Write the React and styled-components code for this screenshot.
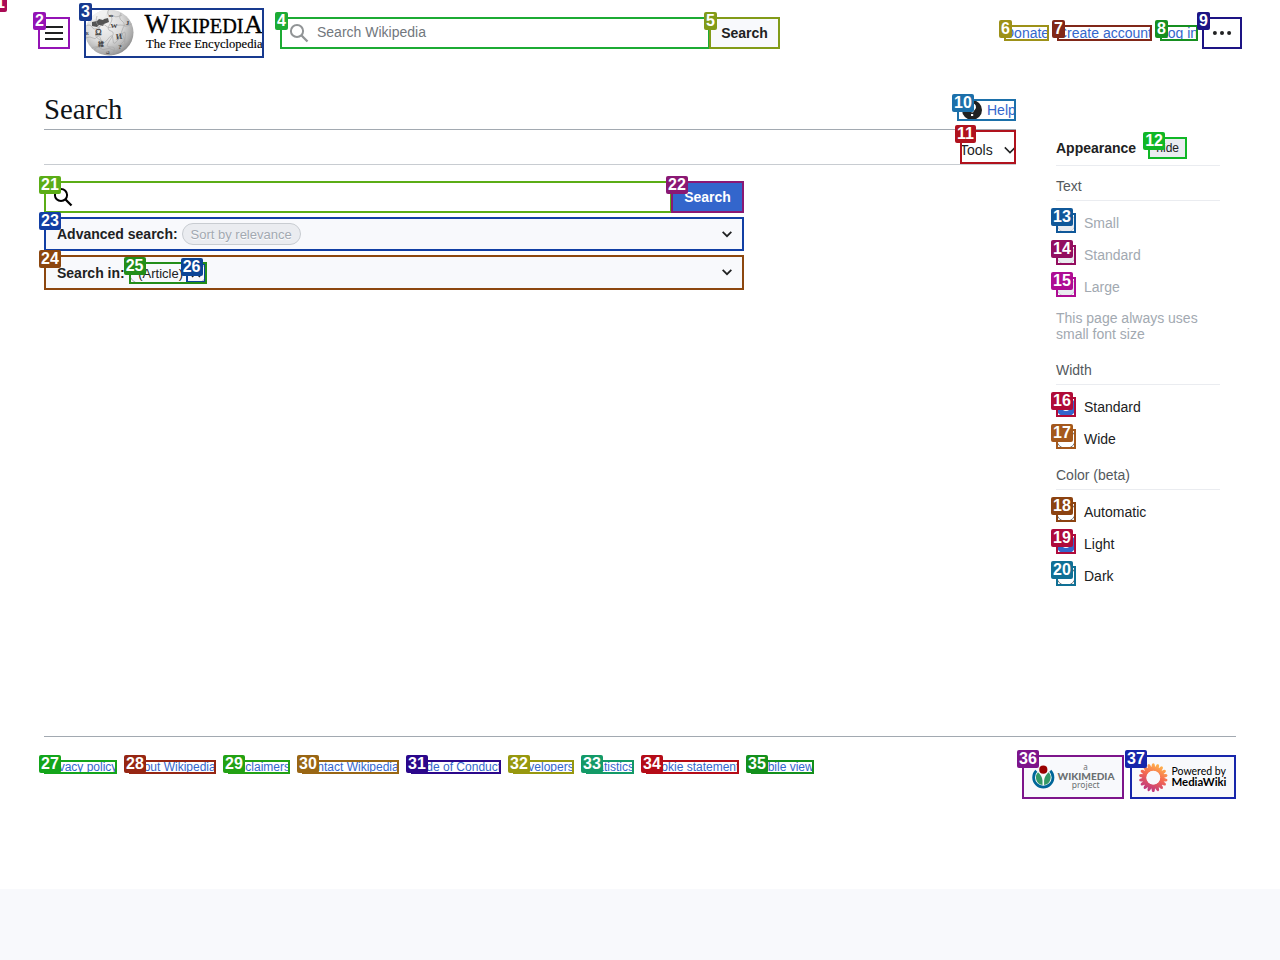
import React from "react";
import styled, { createGlobalStyle } from "styled-components";

const Global = createGlobalStyle`
  *, *::before, *::after { box-sizing: border-box; }
  html, body { margin: 0; background: #f8f9fc; }
  body {
    font-family: "Liberation Sans", Arial, sans-serif;
    font-size: 14px;
    color: #202122;
    overflow: hidden;
  }
`;

/* Numbered outline drawn over an element */
const Outlined = styled.div`
  position: relative;
  flex: none;
  display: flex;
  align-items: center;
  width: ${(p) => p.$w}px;
  height: ${(p) => p.$h}px;
  white-space: nowrap;
  &::after {
    content: "";
    position: absolute;
    inset: 0;
    border: 2px solid ${(p) => p.$c};
  }
`;

const Tag = styled.span`
  position: absolute;
  z-index: 2;
  top: -5px;
  left: -5px;
  height: 18px;
  padding: 0 2px;
  border-radius: 2px;
  background: ${(p) => p.$c};
  color: #fff;
  font: bold 16px/17px "Liberation Sans", Arial, sans-serif;
`;

const PageTag = styled(Tag)`
  top: -6px;
  left: -6px;
`;

function Mark({ n, c, w, h, as: Part = Outlined, children, ...rest }) {
  return (
    <Part $w={w} $h={h} $c={c} {...rest}>
      {children}
      <Tag $c={c}>{n}</Tag>
    </Part>
  );
}

const Page = styled.div`
  height: 889px;
  background: #fff;
  display: flex;
  flex-direction: column;
`;

const Header = styled.header`
  height: 66px;
  padding: 0 38px;
  display: flex;
  align-items: center;
`;

const MenuButton = styled(Outlined)`
  justify-content: center;
  margin-right: 14px;
`;

const SearchField = styled(Outlined)`
  margin-left: 16px;
  padding: 0 0 0 9px;
  gap: 8px;
  color: #72777d;
  > span:not(${Tag}) { margin-top: -2px; }
`;

const GreyButton = styled(Outlined)`
  justify-content: center;
  margin-left: -1px;
  background: #f8f9fc;
  font-weight: bold;
`;

const UserLinks = styled.nav`
  margin-left: auto;
  display: flex;
  align-items: center;
  gap: 8px;
`;

const LinkBox = styled(Outlined)`
  color: #3366cc;
`;

const LinkText = styled.span`
  width: 100%;
  height: 100%;
  overflow: hidden;
  line-height: ${(p) => p.$h}px;
`;

const MoreButton = styled(Outlined)`
  justify-content: center;
  margin-left: -4px;
`;

const Body = styled.div`
  display: flex;
  gap: 40px;
  height: 670px;
  padding-left: 44px;
`;

const Content = styled.main`
  width: 972px;
`;

const TitleRow = styled.div`
  height: 64px;
  padding-top: 22px;
  display: flex;
  align-items: center;
  justify-content: space-between;
  border-bottom: 1px solid #a2a9b1;
`;

const Title = styled.h1`
  margin: 0;
  color: #101418;
  font: 28.8px/36px "Liberation Serif", "Times New Roman", serif;
`;

const HelpLink = styled(Outlined)`
  color: #3366cc;
  padding-left: 5px;
  gap: 5px;
  margin-top: 2px;
`;

const Toolbar = styled.div`
  height: 35px;
  display: flex;
  justify-content: flex-end;
  border-bottom: 1px solid #c8ccd1;
`;

const ToolsMenu = styled(Outlined)`
  padding-top: 5px;
  justify-content: space-between;
`;

const Form = styled.form`
  width: 700px;
  margin-top: 16px;
  display: flex;
  flex-direction: column;
  gap: 4px;
`;

const FieldRow = styled.div`
  display: flex;
`;

const Field = styled(Outlined)`
  margin-right: -1px;
  padding-left: 9px;
`;

const BlueButton = styled(Outlined)`
  justify-content: center;
  background: #3366cc;
  color: #fff;
  font-weight: bold;
`;

const Panel = styled(Outlined)`
  padding: 0 12px 0 13px;
  background: #f8f9fc;
  b { margin-right: 4px; }
`;

const Pill = styled.span`
  height: 22px;
  width: 119px;
  border: 1px solid #c8ccd1;
  border-radius: 11px;
  background: #eaecf0;
  color: #a2a9b1;
  font-size: 13px;
  line-height: 21px;
  text-align: center;
  text-shadow: 0 1px 1px #fff;
`;

const PanelArrow = styled.span`
  margin-left: auto;
  margin-top: -1px;
  display: flex;
`;

const Chip = styled(Outlined)`
  padding: 1px 0 0 8.5px;
  font-size: 13px;
  border: 1px solid #a2a9b1;
  border-radius: 11px;
  justify-content: space-between;
  &::after { inset: -1px; }
  > ${Tag} { top: -6px; left: -6px; }
`;

const ChipClose = styled(Outlined)`
  justify-content: center;
  margin-top: -1px;
`;

const Aside = styled.aside`
  width: 164px;
  padding-top: 64px;
`;

const AsideHead = styled.div`
  height: 36px;
  display: flex;
  align-items: center;
  gap: 12px;
  border-bottom: 1px solid #eaecf0;
`;

const HideButton = styled(Outlined)`
  justify-content: center;
  background: #eaecf0;
  font-size: 12px;
`;

const Group = styled.section`
  padding-top: ${(p) => p.$top}px;
`;

const GroupTitle = styled.div`
  height: 23px;
  line-height: 16px;
  color: #54595d;
  border-bottom: 1px solid #eaecf0;
  margin-bottom: 12px;
`;

const Choice = styled.label`
  height: 20px;
  margin-bottom: 12px;
  display: flex;
  align-items: center;
  gap: 8px;
  color: ${(p) => (p.$off ? "#a2a9b1" : "#202122")};
`;

const Dot = styled.span`
  width: 20px;
  height: 20px;
  border-radius: 50%;
  border: ${(p) => (p.$on ? "6px solid #3366cc" : p.$off ? "1px solid #c8ccd1" : "1px solid #72777d")};
  background: ${(p) => (p.$off ? "#eaecf0" : "#fff")};
`;

const Hint = styled.p`
  margin: 0;
  padding-top: 1px;
  line-height: 16px;
  color: #a2a9b1;
`;

const Footer = styled.footer`
  margin: 0 44px;
  border-top: 1px solid #a2a9b1;
  padding-top: 18px;
  display: flex;
  justify-content: space-between;
  align-items: flex-start;
`;

const FooterLinks = styled.div`
  display: flex;
  gap: 12px;
  padding-top: 5px;
  font-size: 12px;
`;

const Badges = styled.div`
  display: flex;
  gap: 6px;
`;

const BadgeBox = styled(Outlined)`
  background: #f8f9fc;
`;

const Magnifier = ({ color, size = 20 }) => (
  <svg width={size} height={size} viewBox="0 0 20 20" fill="none" stroke={color} strokeWidth="2">
    <circle cx="8" cy="8" r="6.1" />
    <path d="M12.3 12.300l6.200 6.200" strokeWidth="2.300" />
  </svg>
);

const Chevron = ({ size = 12 }) => (
  <svg width={size} height={size} viewBox="0 0 12 12" fill="none" stroke="#202122" strokeWidth={size < 12 ? 2.100 : 1.500}>
    <path d="M.8 3.400l5.200 5.200 5.200-5.200" />
  </svg>
);

const Wordmark = () => (
  <svg width="180" height="50" viewBox="0 0 180 50">
    <defs>
      <radialGradient id="globe" cx="40%" cy="32%" r="72%">
        <stop offset="0" stopColor="#f4f4f4" />
        <stop offset=".5" stopColor="#dcdcdc" />
        <stop offset=".82" stopColor="#aaa" />
        <stop offset="1" stopColor="#777" />
      </radialGradient>
      <clipPath id="globeClip"><ellipse cx="25.300" cy="24.500" rx="24.200" ry="23" /></clipPath>
    </defs>
    <g clipPath="url(#globeClip)">
      <rect width="50" height="50" fill="url(#globe)" />
      <path d="M7 0h18l-4 9-10 2-6 3z" fill="#f1f1f1" />
      <path d="M8 14l5-1 2-2 4 1 1-1 4-1 1 4-5 2-1 2-4-1-2 2-5-1z" fill="#555" />
      <g fill="none" stroke="#a2a2a2" strokeWidth=".6">
        <path d="M0 19q6-4 8 0t7 0 7-1 6 1 8-2 5 1 8-3" />
        <path d="M1 30q6-2 8 0t4-1 4 3 7-1 5 1 7-3 5 2 8-4" />
        <path d="M6 41q7-4 10-1t6 1 7 1 6-2 8-2" />
        <path d="M13 8q-2 6 1 9t-1 7 3 8-2 7 4 8" />
        <path d="M25 1q-3 5 1 7t0 8 1 7-1 9 1 7 0 9" />
        <path d="M37 5q-3 5 1 8t1 7 0 8-1 7-2 9" />
        <path d="M24 8q4-2 6 0t8-1" />
      </g>
      <g fill="#404040" fontFamily="Liberation Serif, serif" fontWeight="bold" textAnchor="middle">
        <text x="14.500" y="26.500" fontSize="8.500" fontWeight="normal" stroke="#404040" strokeWidth=".3">Ω</text>
        <text x="30" y="20" fontSize="7">W</text>
        <text x="35" y="31" fontSize="8" transform="rotate(-8 35 28)">И</text>
        <text x="17" y="37.500" fontFamily="Noto Sans CJK JP, sans-serif" fontSize="6">維</text>
        <text x="36" y="41" fontSize="7">?</text>
        <text x="43.500" y="17" fontSize="7">J</text>
        <text x="27" y="9" fontSize="5">m</text>
        <text x="3" y="27" fontSize="5">R</text>
        <text x="24" y="46" fontSize="5">ය</text>
      </g>
    </g>
    <g fill="#000" stroke="#000" fontFamily="Liberation Serif, serif">
      <text x="60.500" y="25" fontSize="27" strokeWidth=".35" textLength="25" lengthAdjust="spacingAndGlyphs">W</text>
      <text x="86.500" y="24.700" fontSize="20.500" strokeWidth=".35" textLength="73" lengthAdjust="spacingAndGlyphs">IKIPEDI</text>
      <text x="160" y="24.700" fontSize="26" strokeWidth=".35" textLength="19" lengthAdjust="spacingAndGlyphs">A</text>
      <text x="62" y="39.500" fontSize="13.500" strokeWidth=".15" textLength="116.500" lengthAdjust="spacingAndGlyphs">The Free Encyclopedia</text>
    </g>
  </svg>
);

const HelpIcon = () => (
  <svg width="20" height="20" viewBox="0 0 20 20">
    <circle cx="10" cy="10" r="10" fill="#202122" />
    <path d="M6.800 7.400C6.800 3.200 13.200 3.300 13 7.400c-.1 2-2.700 2.400-2.900 5" fill="none" stroke="#fff" strokeWidth="2" />
    <rect x="9" y="14" width="2.200" height="2" fill="#fff" />
  </svg>
);

const WikimediaBadge = () => (
  <svg width="102" height="44" viewBox="0 0 102 44">
    <path d="M14.300 15.700a9.700 9.700 0 1 0 14 0" fill="none" stroke="#006699" strokeWidth="2.700" />
    <path d="M16 17.300a7.500 7.500 0 0 0 4.500 12.600V25.500q0-4-4.500-8.200z" fill="#339966" />
    <path d="M26.600 17.300a7.500 7.500 0 0 1-4.500 12.600V25.500q0-4 4.500-8.200z" fill="#339966" />
    <circle cx="21.300" cy="14.700" r="4.100" fill="#990000" />
    <g fill="#6b7072" textAnchor="middle">
      <text x="63.500" y="14.500" fontFamily="Noto Sans, sans-serif" fontSize="8">a</text>
      <text x="64" y="25" fontFamily="Lato, sans-serif" fontWeight="900" fontSize="10" textLength="57" lengthAdjust="spacingAndGlyphs">WIKIMEDIA</text>
      <text x="63.700" y="33" fontFamily="Noto Sans, sans-serif" fontSize="8.500" textLength="28">project</text>
    </g>
  </svg>
);

const petals = Array.from({ length: 18 }, (_, i) => i * 20);

const MediaWikiBadge = () => (
  <svg width="106" height="44" viewBox="0 0 106 44">
    <defs>
      <linearGradient id="sun" gradientUnits="userSpaceOnUse" x1="29" y1="10" x2="17" y2="36">
        <stop offset="0" stopColor="#ffb34d" />
        <stop offset=".45" stopColor="#f46852" />
        <stop offset="1" stopColor="#b93283" />
      </linearGradient>
      <mask id="petals">
        {petals.map((a) => (
          <ellipse key={a} cx="23.300" cy="12" rx="1.700" ry="3.700" fill="#fff" transform={`rotate(${a} 23.300 22.700)`} />
        ))}
        <circle cx="23.300" cy="22.700" r="9" fill="none" stroke="#fff" strokeWidth="4.400" />
        <circle cx="23.300" cy="22.700" r="6.900" fill="#000" />
      </mask>
    </defs>
    <rect x="8" y="7" width="31" height="31" fill="url(#sun)" mask="url(#petals)" />
    <g fontFamily="Lato, sans-serif" fill="#000">
      <text x="41.500" y="20.300" fontSize="11" textLength="54.500" lengthAdjust="spacingAndGlyphs">Powered by</text>
      <text x="41.500" y="31" fontSize="11" fontWeight="bold" textLength="55" lengthAdjust="spacingAndGlyphs">MediaWiki</text>
    </g>
  </svg>
);

const groups = [
  {
    title: "Text", top: 12, hint: true,
    items: [
      { n: 13, c: "#105899", t: "Small", off: true },
      { n: 14, c: "#930e5f", t: "Standard", off: true },
      { n: 15, c: "#ae0c93", t: "Large", off: true },
    ],
  },
  {
    title: "Width", top: 20,
    items: [
      { n: 16, c: "#b00b37", t: "Standard", on: true },
      { n: 17, c: "#a4581c", t: "Wide" },
    ],
  },
  {
    title: "Color (beta)", top: 6,
    items: [
      { n: 18, c: "#8c4311", t: "Automatic" },
      { n: 19, c: "#af0b3c", t: "Light", on: true },
      { n: 20, c: "#107095", t: "Dark" },
    ],
  },
];

const userLinks = [
  [6, "#9d9118", 45, "Donate"],
  [7, "#812819", 95, "Create account"],
  [8, "#168f20", 38, "Log in"],
];

const footerLinks = [
  [27, "#14a51b", 73, "Privacy policy"],
  [28, "#962613", 87, "About Wikipedia"],
  [29, "#23a114", 62, "Disclaimers"],
  [30, "#996614", 97, "Contact Wikipedia"],
  [31, "#2b078b", 90, "Code of Conduct"],
  [32, "#97980f", 61, "Developers"],
  [33, "#139a67", 48, "Statistics"],
  [34, "#b50c18", 93, "Cookie statement"],
  [35, "#13901c", 63, "Mobile view"],
];

const Links = ({ items, height }) =>
  items.map(([n, c, w, t]) => (
    <Mark as={LinkBox} key={n} n={n} c={c} w={w} h={height}>
      <LinkText $h={height}>{t}</LinkText>
    </Mark>
  ));

export default function App() {
  return (
    <>
      <Global />
      <PageTag $c="#a90b55">1</PageTag>
      <Page>
        <Header>
          <Mark as={MenuButton} n={2} c="#9413b5" w={32} h={32}>
            <svg width="18" height="14" viewBox="0 0 18 14" fill="#202122">
              <path d="M0 0h18v2H0zM0 6h18v2H0zM0 12h18v2H0z" />
            </svg>
          </Mark>
          <Mark n={3} c="#183a8f" w={180} h={50}><Wordmark /></Mark>
          <Mark as={SearchField} n={4} c="#1cab34" w={430} h={32}>
            <Magnifier color="#919496" />
            <span>Search Wikipedia</span>
          </Mark>
          <Mark as={GreyButton} n={5} c="#829b18" w={71} h={32}>Search</Mark>
          <UserLinks>
            <Links items={userLinks} height={16} />
            <Mark as={MoreButton} n={9} c="#1d1484" w={40} h={32}>
              <svg width="20" height="4" viewBox="0 0 20 4" fill="#202122">
                <circle cx="2.900" cy="2" r="2" /><circle cx="10" cy="2" r="2" /><circle cx="17.100" cy="2" r="2" />
              </svg>
            </Mark>
          </UserLinks>
        </Header>

        <Body>
          <Content>
            <TitleRow>
              <Title>Search</Title>
              <Mark as={HelpLink} n={10} c="#1c70aa" w={59} h={22}><HelpIcon />Help</Mark>
            </TitleRow>
            <Toolbar>
              <Mark as={ToolsMenu} n={11} c="#b0121d" w={56} h={34}>Tools<Chevron /></Mark>
            </Toolbar>
            <Form>
              <FieldRow>
                <Mark as={Field} n={21} c="#5bad16" w={628} h={32}><Magnifier color="#000" /></Mark>
                <Mark as={BlueButton} n={22} c="#8a1874" w={73} h={32}>Search</Mark>
              </FieldRow>
              <Mark as={Panel} n={23} c="#123fa4" w={700} h={34}>
                <b>Advanced search:</b>
                <Pill>Sort by relevance</Pill>
                <PanelArrow><Chevron size={10} /></PanelArrow>
              </Mark>
              <Mark as={Panel} n={24} c="#8c470f" w={700} h={35}>
                <b>Search in:</b>
                <Mark as={Chip} n={25} c="#238e19" w={78} h={22}>
                  (Article)
                  <Mark as={ChipClose} n={26} c="#0c4596" w={20} h={20}>
                    <svg width="10" height="10" viewBox="0 0 10 10" stroke="#202122" strokeWidth="1.600">
                      <path d="M1 1l8 8M9 1l-8 8" />
                    </svg>
                  </Mark>
                </Mark>
                <PanelArrow><Chevron size={10} /></PanelArrow>
              </Mark>
            </Form>
          </Content>

          <Aside>
            <AsideHead>
              <b>Appearance</b>
              <Mark as={HideButton} n={12} c="#10b726" w={39} h={22}>hide</Mark>
            </AsideHead>
            {groups.map((g) => (
              <Group key={g.title} $top={g.top}>
                <GroupTitle>{g.title}</GroupTitle>
                {g.items.map((i) => (
                  <Choice key={i.n} $off={i.off}>
                    <Mark n={i.n} c={i.c} w={20} h={20}><Dot $on={i.on} $off={i.off} /></Mark>
                    {i.t}
                  </Choice>
                ))}
                {g.hint && <Hint>This page always uses<br />small font size</Hint>}
              </Group>
            ))}
          </Aside>
        </Body>

        <Footer>
          <FooterLinks>
            <Links items={footerLinks} height={14} />
          </FooterLinks>
          <Badges>
            <Mark as={BadgeBox} n={36} c="#7d158b" w={102} h={44}><WikimediaBadge /></Mark>
            <Mark as={BadgeBox} n={37} c="#1726ab" w={106} h={44}><MediaWikiBadge /></Mark>
          </Badges>
        </Footer>
      </Page>
    </>
  );
}
